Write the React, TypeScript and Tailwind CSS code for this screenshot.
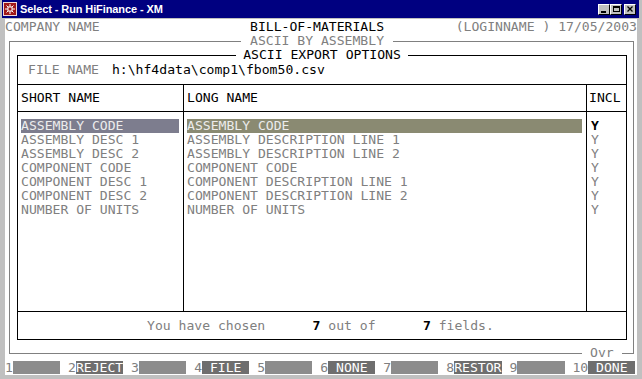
import React from 'react';

const mono = "font-['DejaVu_Sans_Mono',monospace] text-[13.1px] leading-[14px]";

const shortNames = [
  'ASSEMBLY CODE',
  'ASSEMBLY DESC 1',
  'ASSEMBLY DESC 2',
  'COMPONENT CODE',
  'COMPONENT DESC 1',
  'COMPONENT DESC 2',
  'NUMBER OF UNITS',
];

const longNames = [
  'ASSEMBLY CODE',
  'ASSEMBLY DESCRIPTION LINE 1',
  'ASSEMBLY DESCRIPTION LINE 2',
  'COMPONENT CODE',
  'COMPONENT DESCRIPTION LINE 1',
  'COMPONENT DESCRIPTION LINE 2',
  'NUMBER OF UNITS',
];

const keys = [
  { n: '1', l: '' },
  { n: '2', l: 'REJECT' },
  { n: '3', l: '' },
  { n: '4', l: ' FILE' },
  { n: '5', l: '' },
  { n: '6', l: ' NONE' },
  { n: '7', l: '' },
  { n: '8', l: 'RESTOR' },
  { n: '9', l: '' },
  { n: '10', l: ' DONE' },
];

const AppIcon = () => (
  <svg width="14" height="14" viewBox="0 0 14 14" className="mr-[3px] shrink-0">
    <rect x="0" y="0" width="14" height="14" fill="#a01818" />
    <rect x="0.5" y="0.5" width="13" height="13" fill="none" stroke="#f0d8d8" strokeWidth="1" />
    <path d="M7 2v10M2 7h10M3.5 3.5l7 7M10.5 3.5l-7 7" stroke="#ffffff" strokeWidth="1" />
    <rect x="5" y="5" width="4" height="4" fill="#a01818" stroke="#ffffff" strokeWidth="1" />
  </svg>
);

const WinButton: React.FC<{ children: React.ReactNode; className?: string }> = ({ children, className }) => (
  <div
    className={`w-[12px] h-[11px] bg-[#c0c0c0] border border-t-white border-l-white border-r-black border-b-black flex ${className ?? ''}`}
  >
    {children}
  </div>
);

const TitleBar = () => (
  <div className="ml-[2px] w-[637px] h-[18px] bg-[#000080] flex items-center pl-[1px] pr-[3px]">
    <AppIcon />
    <span className="text-white font-bold text-[11px] tracking-[-0.1px] font-['Liberation_Sans',Arial,sans-serif]">
      Select - Run HiFinance - XM
    </span>
    <div className="ml-auto flex items-center">
      <WinButton className="items-end pl-[2px] pb-[1px]">
        <div className="w-[5px] h-[2px] bg-black" />
      </WinButton>
      <WinButton className="items-center justify-center">
        <div className="w-[7px] h-[6px] border border-black border-t-2" />
      </WinButton>
      <WinButton className="ml-[2px] items-center justify-center">
        <svg width="6" height="6" viewBox="0 0 6 6">
          <path d="M0.5 0.5l5 5M5.5 0.5l-5 5" stroke="#000" strokeWidth="1.3" />
        </svg>
      </WinButton>
    </div>
  </div>
);

export default function App() {
  return (
    <div className="w-[642px] h-[379px] overflow-hidden bg-[#c0c0c0]">
      <TitleBar />

      <div className={`mt-[1px] ml-[5px] w-[632px] h-[356px] bg-white pt-[1px] text-[#808080] whitespace-pre ${mono}`}>
        {/* top line */}
        <div className="flex h-[14px]">
          <span className="w-[245px]">COMPANY NAME</span>
          <span className="text-black">BILL-OF-MATERIALS</span>
          <span className="ml-auto">(LOGINNAME ) 17/05/2003</span>
        </div>

        {/* outer frame */}
        <div className="mt-[7px] ml-[4px] mr-[3px] h-[313px] border border-[#808080]">
          <div className="-mt-[8px] h-[14px] flex">
            <span className="ml-[231px] px-[9px] bg-white">ASCII BY ASSEMBLY</span>
          </div>

          {/* inner frame */}
          <div className="mt-[7px] ml-[7px] mr-[6px] border border-black">
            <div className="-mt-[8px] h-[14px] flex justify-center">
              <span className="px-[7px] bg-white text-black">ASCII EXPORT OPTIONS</span>
            </div>

            <div className="h-[23px] pt-[1px] pl-[10px] border-b border-black flex">
              <span>FILE NAME</span>
              <span className="ml-[13px] text-black">{'h:\\hf4data\\comp1\\fbom50.csv'}</span>
            </div>

            <div className="h-[227px] border-b border-black grid grid-cols-[166px_403px_1fr]">
              <div className="border-r border-black">
                <div className="h-[27px] pt-[6px] pl-[3px] border-b border-black text-black">SHORT NAME</div>
                <div className="pt-[7px] pl-[3px]">
                  {shortNames.map((s, i) => (
                    <div
                      key={s}
                      className={i === 0 ? 'h-[14px] w-[158px] bg-[#7d7d8e] text-[#ececec]' : 'h-[14px]'}
                    >
                      {s}
                    </div>
                  ))}
                </div>
              </div>

              <div className="border-r border-black">
                <div className="h-[27px] pt-[6px] pl-[3px] border-b border-black text-black">LONG NAME</div>
                <div className="pt-[7px] pl-[3px]">
                  {longNames.map((s, i) => (
                    <div
                      key={s}
                      className={i === 0 ? 'h-[14px] w-[395px] bg-[#8a8a72] text-[#ececec]' : 'h-[14px]'}
                    >
                      {s}
                    </div>
                  ))}
                </div>
              </div>

              <div>
                <div className="h-[27px] pt-[6px] pl-[2px] border-b border-black text-black">INCL</div>
                <div className="pt-[7px] pl-[4px]">
                  {shortNames.map((s, i) => (
                    <div key={s} className={i === 0 ? 'h-[14px] text-black font-bold' : 'h-[14px]'}>
                      Y
                    </div>
                  ))}
                </div>
              </div>
            </div>

            <div className="h-[27px] pt-[7px] pl-[129px]">
              {'You have chosen      '}
              <span className="text-black font-bold">7</span>
              {' out of      '}
              <span className="text-black font-bold">7</span>
              {' fields.'}
            </div>
          </div>

          <div className="mt-[6px] h-[14px] flex">
            <span className="ml-[572px] px-[8px] bg-white">Ovr</span>
          </div>
        </div>

        {/* function keys */}
        <div className="mt-[7px] h-[13px] flex leading-[13px]">
          {keys.map((k) => (
            <div key={k.n} className="flex">
              <span className={k.n === '10' ? 'w-[2ch]' : 'w-[1ch]'}>{k.n}</span>
              <span className={`w-[6ch] ${k.l ? 'bg-[#6e6e6e] text-white' : 'bg-[#8c8c8c]'}`}>{k.l}</span>
              {k.n !== '10' && <span className="w-[1ch]" />}
            </div>
          ))}
        </div>
      </div>
    </div>
  );
}
